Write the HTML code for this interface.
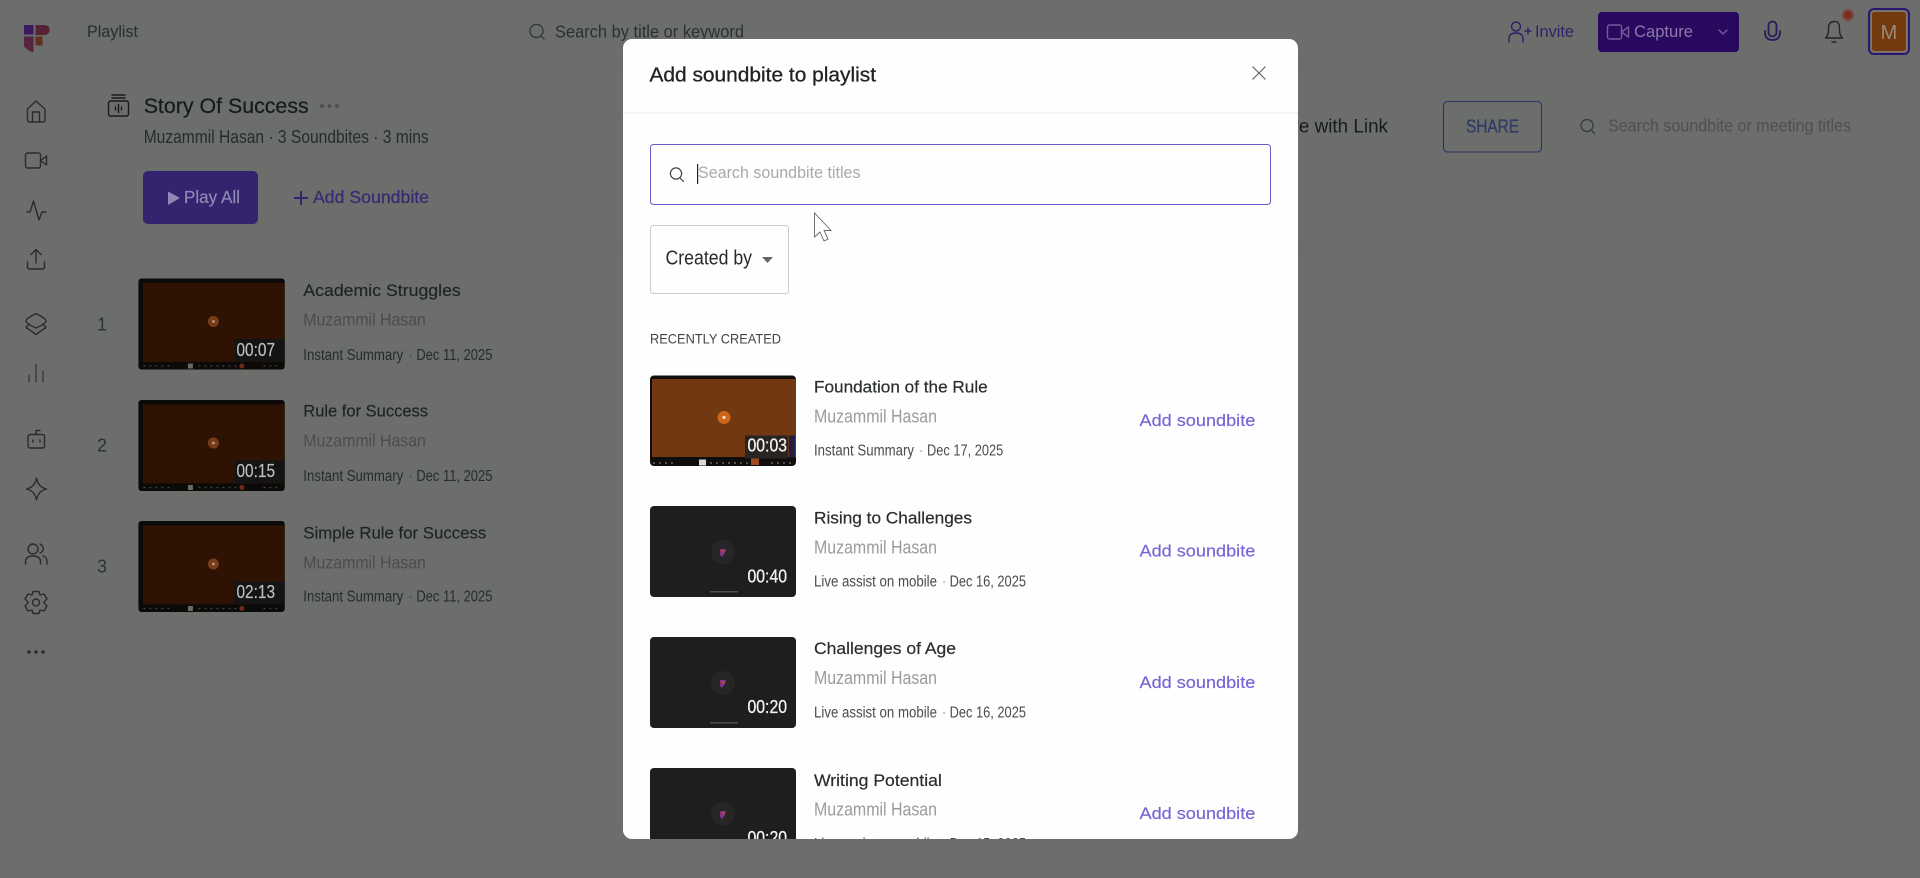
<!DOCTYPE html>
<html lang="en"><head><meta charset="utf-8"><title>Add soundbite to playlist</title>
<style>
html,body{margin:0;padding:0;width:1920px;height:878px;overflow:hidden;background:#6c6e6c}
svg{display:block}
text{font-family:"Liberation Sans",sans-serif}
.ic{fill:none;stroke:#2a2c2c;stroke-width:1.4;stroke-linecap:round;stroke-linejoin:round}
</style></head><body>
<svg xmlns="http://www.w3.org/2000/svg" width="1920" height="878" viewBox="0 0 1920 878">
<defs>
<clipPath id="mc"><rect x="623" y="39" width="675" height="800" rx="9"/></clipPath>
<g id="tl">
<rect width="146.3" height="91" rx="3" fill="#0b0a09"/>
<rect x="4.6" y="4.4" width="141.7" height="79" fill="#2e1305"/>
<circle cx="75" cy="43" r="5.5" fill="#7a3c16"/>
<circle cx="75" cy="43" r="1.4" fill="#b89a84"/>
<rect x="49.5" y="85" width="5" height="5" fill="#6a6a62"/>
<circle cx="103.5" cy="87.5" r="2.5" fill="#6a2c18"/>
<path d="M5 87.5h26M60 87.5h38M125 87.5h18" stroke="#444" stroke-width="1.2" stroke-dasharray="2 4" fill="none"/>
<rect x="96" y="60.6" width="50.3" height="22.5" fill="#141414"/>
</g>
<g id="to">
<rect width="146" height="90.5" rx="4" fill="#100e0d"/>
<rect x="2" y="3.5" width="144" height="78" fill="#723811"/>
<circle cx="74" cy="42" r="6.5" fill="#cc6618"/>
<circle cx="74" cy="42" r="1.6" fill="#f0ddcc"/>
<rect x="95" y="60" width="43" height="23" fill="#282422"/>
<rect x="139" y="60" width="6" height="22" fill="#241d44"/>
<rect x="49" y="84" width="7" height="6" fill="#d8d8d8"/>
<rect x="101" y="83" width="8" height="6.5" fill="#a24a24"/>
<path d="M3 87.5h24M60 87.5h38M121 87.5h22" stroke="#777" stroke-width="1.2" stroke-dasharray="2 4" fill="none"/>
</g>
<g id="td">
<rect width="146" height="91" rx="4" fill="#1d1e1d"/>
<circle cx="73" cy="46" r="12" fill="#262627"/>
<path d="M70 43h6l-1 4-3 4-2-2z" fill="#7a3488"/>
<rect x="72" y="44" width="2.500" height="2.500" fill="#c8442a"/>
<rect x="60" y="85" width="28" height="1.500" fill="#4e4e4e"/>
</g>
</defs>

<rect width="1920" height="878" fill="#6c6e6c"/>

<!-- top bar -->
<rect x="24" y="25" width="9.500" height="9.500" fill="#3c1860"/>
<path d="M35.500 25h8.500q5.500 0 5.500 5t-5.500 5h-8.500z" fill="#582236"/>
<path d="M24 36.500h9.500v16l-5-2-4.500-4z" fill="#582240"/>
<rect x="35.500" y="36.500" width="7" height="9" fill="#642e22"/>
<text x="87" y="37" font-size="16.500" fill="#272c2c" textLength="51" lengthAdjust="spacingAndGlyphs">Playlist</text>
<g class="ic" style="stroke:#363939"><circle cx="536.500" cy="31" r="6.500"/><path d="M541 36l3 3"/></g>
<text x="555" y="37.500" font-size="17.500" fill="#2c3030" textLength="189" lengthAdjust="spacingAndGlyphs">Search by title or keyword</text>
<path d="M81 64H1920" stroke="#646664"/>

<g class="ic" style="stroke:#2b2068"><circle cx="1516" cy="26.500" r="4.500"/><path d="M1509 42v-3q0-6 7-6t7 6v3M1525 31h6M1528 28v6"/></g>
<text x="1535" y="37" font-size="17" fill="#2e2268" textLength="39" lengthAdjust="spacingAndGlyphs">Invite</text>
<rect x="1598" y="12" width="141" height="40" rx="4" fill="#28095f"/>
<g class="ic" style="stroke:#6f5c98"><rect x="1607.500" y="25" width="14" height="14" rx="2"/><path d="M1621.500 32l7-5v10z"/><path d="M1719 30l4 4 4-4"/></g>
<text x="1634" y="37" font-size="17" fill="#8a7aa8" textLength="59" lengthAdjust="spacingAndGlyphs">Capture</text>
<g class="ic" style="stroke:#281d5c;stroke-width:1.800"><rect x="1768.500" y="21.500" width="8" height="15" rx="4"/><path d="M1765 31v1q0 8 7.500 8t7.500-8v-1"/></g>
<g class="ic" style="stroke:#242626"><path d="M1825.500 38q3-3 3-8v-2q0-6 5.500-6.500t5.500 6.500v2q0 5 3 8z"/><path d="M1832 42h4"/></g>
<circle cx="1848" cy="15" r="6.500" fill="#74564f"/><circle cx="1848" cy="15" r="4.500" fill="#7a3020"/>
<rect x="1869" y="9" width="40" height="45" rx="5" fill="none" stroke="#2d1670" stroke-width="2"/>
<rect x="1871.500" y="11.500" width="35" height="40" rx="3" fill="#733a10" stroke="#857668"/>
<text x="1889" y="39" font-size="20" fill="#9c8a78" text-anchor="middle">M</text>

<!-- sidebar -->
<g class="ic">
<path d="M27.500 109l8.500-8 9 8v11q0 2-2 2H29.500q-2 0-2-2zM32.500 122v-10h7v10"/>
<rect x="25.500" y="153" width="15" height="15" rx="2"/><path d="M40.500 160.500l6-4.500v9z"/>
<path d="M27 212h3l3.500-11 5.500 19 3-8h4"/>
<path d="M36 263v-13M31 254.500l5-5 5 5M27.500 262v5q0 2 2 2h13q2 0 2-2v-5"/>
<path d="M36 313.500q10 5 10 7.500t-10 7q-10-4.500-10-7t10-7.500z"/><path d="M29 324l-3 3.500 10 7 10-7-3-3.500"/>
<path d="M29 382v-7M36 382v-18M43 382v-11" stroke-width="1.100"/>
<rect x="28" y="434.500" width="16.500" height="13.500" rx="2"/><path d="M36 434.500v-4h4"/><path d="M33 440v2M40 440v2"/>
<path d="M36.500 478q1.500 9 10 11-8.500 2-10 11-1.500-9-10-11 8.500-2 10-11z" transform="translate(36.500 489) scale(1) translate(-36.500 -489)"/>
<circle cx="33" cy="549" r="5"/><path d="M25.500 564v-2q0-6 7.500-6t7.500 6v2M40 544q4 2 3 6-.5 2-3 3M43 556q4 1 4 6v2"/>
<circle cx="36" cy="602.500" r="3.500"/><path d="M33 591.500h6l1 3.500 4-1 3 5-3 3 0 1 3 3-3 5-4-1-1 3.500h-6l-1-3.500-4 1-3-5 3-3 0-1-3-3 3-5 4 1z"/>
</g>
<g fill="#2a2c2c"><circle cx="29" cy="652" r="1.700"/><circle cx="36" cy="652" r="1.700"/><circle cx="43" cy="652" r="1.700"/></g>

<!-- playlist header -->
<g class="ic" style="stroke:#191b1b"><rect x="108.500" y="101" width="20" height="15" rx="2"/><path d="M112 98h13M112 95h13M118.500 104.500v8M115.500 107v3M121.500 107v3"/></g>
<text x="143.700" y="113" font-size="21.500" fill="#171a1a" stroke="#171a1a" stroke-width=".2" textLength="165" lengthAdjust="spacingAndGlyphs">Story Of Success</text>
<g fill="#4f5151"><circle cx="322" cy="106" r="2"/><circle cx="329.500" cy="106" r="2"/><circle cx="337" cy="106" r="2"/></g>
<text x="143.700" y="143" font-size="18" fill="#272b2b" textLength="285" lengthAdjust="spacingAndGlyphs">Muzammil Hasan · 3 Soundbites · 3 mins</text>
<rect x="143" y="171" width="115" height="53" rx="5" fill="#34246f"/>
<path d="M168 191.500l12 6.500-12 7z" fill="#8f88b3"/>
<text x="184" y="203" font-size="17.500" fill="#8f88b3" stroke="#8f88b3" stroke-width=".2" textLength="56" lengthAdjust="spacingAndGlyphs">Play All</text>
<path d="M301 191v14M294 198h14" stroke="#34246f" stroke-width="2" fill="none"/>
<text x="313" y="203" font-size="17.500" fill="#352a72" stroke="#352a72" stroke-width=".2" textLength="116" lengthAdjust="spacingAndGlyphs">Add Soundbite</text>
<path d="M80 248H1920" stroke="#646664"/>

<!-- left list -->
<use href="#tl" x="138.400" y="278.500"/><use href="#tl" x="138.400" y="400"/><use href="#tl" x="138.400" y="521"/>
<g font-size="18" fill="#bdbdbd" stroke="#bdbdbd" stroke-width=".2">
<text x="236.500" y="356" textLength="38.500" lengthAdjust="spacingAndGlyphs">00:07</text>
<text x="236.500" y="477" textLength="38.500" lengthAdjust="spacingAndGlyphs">00:15</text>
<text x="236.500" y="598" textLength="38.500" lengthAdjust="spacingAndGlyphs">02:13</text>
</g>
<g font-size="18" fill="#2d3131" text-anchor="middle"><text x="102" y="330.500">1</text><text x="102" y="451.500">2</text><text x="102" y="572.500">3</text></g>
<g font-size="17" fill="#1f2222" stroke="#1f2222" stroke-width=".15">
<text x="303.300" y="296" textLength="157.500" lengthAdjust="spacingAndGlyphs">Academic Struggles</text>
<text x="303.300" y="416.700" textLength="124.700" lengthAdjust="spacingAndGlyphs">Rule for Success</text>
<text x="303.300" y="538.700" textLength="183" lengthAdjust="spacingAndGlyphs">Simple Rule for Success</text>
</g>
<g font-size="17.500" fill="#4b4d4d">
<text x="303.300" y="325.700" textLength="122.600" lengthAdjust="spacingAndGlyphs">Muzammil Hasan</text>
<text x="303.300" y="446.700" textLength="122.600" lengthAdjust="spacingAndGlyphs">Muzammil Hasan</text>
<text x="303.300" y="568.300" textLength="122.600" lengthAdjust="spacingAndGlyphs">Muzammil Hasan</text>
</g>
<g font-size="15.500" fill="#272b2b">
<text x="303.300" y="360" textLength="100" lengthAdjust="spacingAndGlyphs">Instant Summary</text><text x="408" y="360" fill="#4b4d4d">·</text><text x="416.400" y="360" textLength="76" lengthAdjust="spacingAndGlyphs">Dec 11, 2025</text>
<text x="303.300" y="481" textLength="100" lengthAdjust="spacingAndGlyphs">Instant Summary</text><text x="408" y="481" fill="#4b4d4d">·</text><text x="416.400" y="481" textLength="76" lengthAdjust="spacingAndGlyphs">Dec 11, 2025</text>
<text x="303.300" y="601.300" textLength="100" lengthAdjust="spacingAndGlyphs">Instant Summary</text><text x="408" y="601.300" fill="#4b4d4d">·</text><text x="416.400" y="601.300" textLength="76" lengthAdjust="spacingAndGlyphs">Dec 11, 2025</text>
</g>

<!-- share -->
<text x="1259" y="132.700" font-size="19.500" fill="#191c1c" textLength="129" lengthAdjust="spacingAndGlyphs">Share with Link</text>
<rect x="1443.500" y="101.500" width="98" height="50.500" rx="4" fill="none" stroke="#332e6a" stroke-width="1.100"/>
<text x="1466" y="132.700" font-size="18" fill="#303b68" stroke="#303b68" stroke-width=".35" textLength="53" lengthAdjust="spacingAndGlyphs">SHARE</text>
<g class="ic" style="stroke:#3a3d3d"><circle cx="1587" cy="125.500" r="6"/><path d="M1591.500 130l3 3.500"/></g>
<text x="1608" y="131.700" font-size="17.300" fill="#4e5050" textLength="243" lengthAdjust="spacingAndGlyphs">Search soundbite or meeting titles</text>
<path d="M1590 101.500H1895M1590 151.500H1895" stroke="#5e605e" stroke-dasharray="1 4" fill="none"/>

<!-- modal -->
<rect x="623" y="39" width="675" height="800" rx="9" fill="#fdfefd"/>
<g clip-path="url(#mc)">
<text x="649.500" y="81.700" font-size="20" fill="#1f2222" stroke="#1f2222" stroke-width=".3" textLength="226.500" lengthAdjust="spacingAndGlyphs">Add soundbite to playlist</text>
<path d="M1252.500 66.500l13 13M1265.500 66.500l-13 13" stroke="#666" stroke-width="1.200" fill="none"/>
<path d="M623 113H1298" stroke="#e8eaea"/>
<rect x="650.500" y="144.500" width="620" height="60" rx="3" fill="#fdfefd" stroke="#6a5cc4" stroke-width="1"/>
<g class="ic" style="stroke:#444;stroke-width:1.200"><circle cx="676" cy="173.500" r="5.600"/><path d="M680 178l3.500 3.500"/></g>
<path d="M697.600 164v20" stroke="#222" stroke-width="1.200"/>
<text x="698" y="178" font-size="16.500" fill="#a8aaaa" textLength="162.500" lengthAdjust="spacingAndGlyphs">Search soundbite titles</text>
<rect x="650.500" y="225.500" width="138" height="68" rx="3" fill="#fdfefd" stroke="#cccccc" stroke-width="1"/>
<text x="665.500" y="264.300" font-size="20" fill="#2a2a2a" textLength="86.500" lengthAdjust="spacingAndGlyphs">Created by</text>
<path d="M762 257h11l-5.500 6z" fill="#666"/>
<path d="M814.500 213v24l5.500-5 4 9 4-2-4-8.500 7 0z" fill="#fdfefd" stroke="#666" stroke-width=".9"/>
<text x="650" y="343.300" font-size="14" fill="#444" textLength="131" lengthAdjust="spacingAndGlyphs">RECENTLY CREATED</text>

<use href="#to" x="650" y="375.500"/><use href="#td" x="650" y="506"/><use href="#td" x="650" y="637"/><use href="#td" x="650" y="768"/>
<g font-size="18" fill="#f2f2f2" stroke="#f2f2f2" stroke-width=".3">
<text x="747.500" y="451.700" textLength="39.500" lengthAdjust="spacingAndGlyphs">00:03</text>
<text x="747.500" y="582.300" textLength="39.500" lengthAdjust="spacingAndGlyphs">00:40</text>
<text x="747.500" y="713" textLength="39.500" lengthAdjust="spacingAndGlyphs">00:20</text>
<text x="747.500" y="844" textLength="39.500" lengthAdjust="spacingAndGlyphs">00:20</text>
</g>
<g font-size="17" fill="#2a2d2d" stroke="#2a2d2d" stroke-width=".2">
<text x="814" y="392.700" textLength="173.700" lengthAdjust="spacingAndGlyphs">Foundation of the Rule</text>
<text x="814" y="523.300" textLength="158" lengthAdjust="spacingAndGlyphs">Rising to Challenges</text>
<text x="814" y="654" textLength="142" lengthAdjust="spacingAndGlyphs">Challenges of Age</text>
<text x="814" y="786" textLength="127.800" lengthAdjust="spacingAndGlyphs">Writing Potential</text>
</g>
<g font-size="18" fill="#9a9c9c">
<text x="814" y="422.700" textLength="123" lengthAdjust="spacingAndGlyphs">Muzammil Hasan</text>
<text x="814" y="553.300" textLength="123" lengthAdjust="spacingAndGlyphs">Muzammil Hasan</text>
<text x="814" y="684" textLength="123" lengthAdjust="spacingAndGlyphs">Muzammil Hasan</text>
<text x="814" y="815.700" textLength="123" lengthAdjust="spacingAndGlyphs">Muzammil Hasan</text>
</g>
<g font-size="15.500" fill="#4a4c4c">
<text x="814" y="455.300" textLength="100" lengthAdjust="spacingAndGlyphs">Instant Summary</text><text x="918.500" y="455.300" fill="#aaa">·</text><text x="927" y="455.300" textLength="76.300" lengthAdjust="spacingAndGlyphs">Dec 17, 2025</text>
<text x="814" y="586.700" textLength="123" lengthAdjust="spacingAndGlyphs">Live assist on mobile</text><text x="941.500" y="586.700" fill="#aaa">·</text><text x="949.600" y="586.700" textLength="76.400" lengthAdjust="spacingAndGlyphs">Dec 16, 2025</text>
<text x="814" y="717.700" textLength="123" lengthAdjust="spacingAndGlyphs">Live assist on mobile</text><text x="941.500" y="717.700" fill="#aaa">·</text><text x="949.600" y="717.700" textLength="76.400" lengthAdjust="spacingAndGlyphs">Dec 16, 2025</text>
<text x="814" y="849" textLength="123" lengthAdjust="spacingAndGlyphs">Live assist on mobile</text><text x="941.500" y="849" fill="#aaa">·</text><text x="949.600" y="849" textLength="76.400" lengthAdjust="spacingAndGlyphs">Dec 15, 2025</text>
</g>
<g font-size="17" fill="#7464d6" stroke="#7464d6" stroke-width=".15">
<text x="1139.500" y="426" textLength="115.800" lengthAdjust="spacingAndGlyphs">Add soundbite</text>
<text x="1139.500" y="556.700" textLength="115.800" lengthAdjust="spacingAndGlyphs">Add soundbite</text>
<text x="1139.500" y="688" textLength="115.800" lengthAdjust="spacingAndGlyphs">Add soundbite</text>
<text x="1139.500" y="819" textLength="115.800" lengthAdjust="spacingAndGlyphs">Add soundbite</text>
</g>
</g>
</svg>
</body></html>
